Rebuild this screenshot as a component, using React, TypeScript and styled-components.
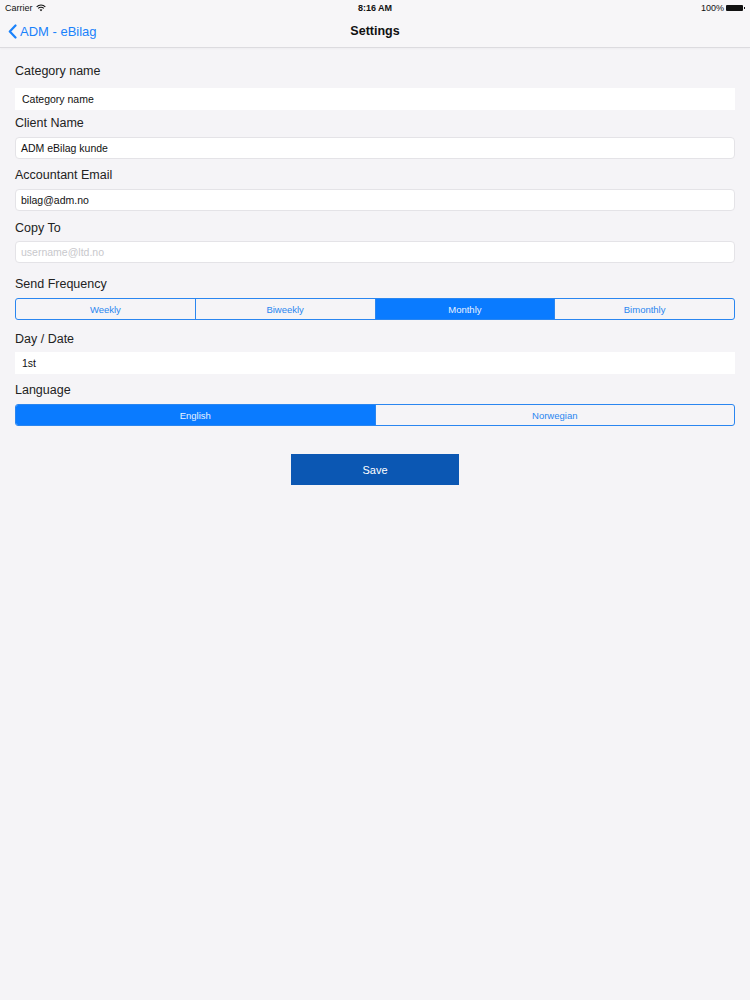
import React, { useState } from "react";
import styled, { createGlobalStyle } from "styled-components";

const GlobalStyle = createGlobalStyle`
  html, body {
    margin: 0;
    padding: 0;
    background: #f5f4f7;
    font-family: "Liberation Sans", Arial, sans-serif;
  }
  * { box-sizing: border-box; }
`;

const Page = styled.div`
  width: 750px;
  min-height: 1000px;
  background: #f5f4f7;
`;

const StatusBar = styled.div`
  height: 15px;
  display: grid;
  grid-template-columns: 1fr auto 1fr;
  align-items: center;
  padding: 0 5px;
  font-size: 9px;
  color: #111;
  background: #f7f6f8;
`;

const StatusLeft = styled.div`
  display: flex;
  align-items: center;
  gap: 3px;
`;

const StatusTime = styled.div`
  font-weight: bold;
  font-size: 9px;
`;

const StatusRight = styled.div`
  display: flex;
  align-items: center;
  justify-content: flex-end;
  gap: 2px;
`;

const Battery = styled.div`
  width: 17px;
  height: 6px;
  background: #111;
  border-radius: 1px;
  position: relative;
  margin-right: 2px;
  &::after {
    content: "";
    position: absolute;
    right: -2px;
    top: 2px;
    width: 1px;
    height: 2px;
    background: #111;
  }
`;

const NavBar = styled.div`
  height: 33px;
  display: grid;
  grid-template-columns: 1fr auto 1fr;
  align-items: center;
  padding: 0 8px;
  background: #f7f6f8;
  border-bottom: 1px solid #dcdbdf;
  box-shadow: 0 1px 2px rgba(0, 0, 0, 0.03);
`;

const BackLink = styled.div`
  display: flex;
  align-items: center;
  gap: 3px;
  color: #1a82fb;
  font-size: 13px;
`;

const Title = styled.div`
  font-weight: bold;
  font-size: 12.5px;
  color: #111;
`;

const Form = styled.div`
  padding: 14px 15px 0 15px;
  display: flex;
  flex-direction: column;
`;

const Group = styled.div<{ $gap: number }>`
  margin-bottom: ${(p) => p.$gap}px;
  display: flex;
  flex-direction: column;
`;

const Label = styled.div<{ $gap: number }>`
  font-size: 12.5px;
  color: #222;
  height: 18px;
  line-height: 18px;
  margin-bottom: ${(p) => p.$gap}px;
`;

const Field = styled.div<{ $bordered?: boolean }>`
  height: 22px;
  display: flex;
  align-items: center;
  background: #fff;
  border-radius: ${(p) => (p.$bordered ? "4px" : "0")};
  border: ${(p) => (p.$bordered ? "1px solid #e4e3e7" : "none")};
  padding: 0 ${(p) => (p.$bordered ? "5px" : "7px")};
  font-size: 10.5px;
  color: #111;
`;

const Placeholder = styled.span`
  color: #c8c8cc;
`;

const Segmented = styled.div`
  height: 22px;
  display: flex;
  border: 1px solid #2a86f0;
  border-radius: 3px;
  overflow: hidden;
`;

const Segment = styled.div<{ $active: boolean }>`
  flex: 1;
  display: flex;
  align-items: center;
  justify-content: center;
  font-size: 9.5px;
  cursor: pointer;
  color: ${(p) => (p.$active ? "#e8f2ff" : "#2a86f0")};
  background: ${(p) => (p.$active ? "#0a7bff" : "transparent")};
  & + & {
    border-left: 1px solid #2a86f0;
  }
`;

const SaveRow = styled.div`
  display: flex;
  justify-content: center;
  padding-top: 28px;
`;

const SaveButton = styled.button`
  width: 168px;
  height: 31px;
  border: none;
  background: #0b57b3;
  color: #fff;
  font-family: inherit;
  font-size: 11px;
`;

const Wifi = () => (
  <svg width="10" height="8" viewBox="0 0 12 9">
    <path d="M6 8.5 L4.3 6.7 A2.5 2.5 0 0 1 7.7 6.7 Z" fill="#111" />
    <path d="M2.6 5 A4.8 4.8 0 0 1 9.4 5" stroke="#111" strokeWidth="1.3" fill="none" />
    <path d="M0.8 3.1 A7.3 7.3 0 0 1 11.2 3.1" stroke="#111" strokeWidth="1.3" fill="none" />
  </svg>
);

const Chevron = () => (
  <svg width="9" height="15" viewBox="0 0 9 15">
    <path d="M7.5 1.5 L1.8 7.5 L7.5 13.5" stroke="#1a82fb" strokeWidth="2.2" fill="none" strokeLinecap="round" strokeLinejoin="round" />
  </svg>
);

const frequencies = ["Weekly", "Biweekly", "Monthly", "Bimonthly"];
const languages = ["English", "Norwegian"];

export default function App() {
  const [freq, setFreq] = useState("Monthly");
  const [lang, setLang] = useState("English");

  return (
    <Page>
      <GlobalStyle />
      <StatusBar>
        <StatusLeft>
          Carrier <Wifi />
        </StatusLeft>
        <StatusTime>8:16 AM</StatusTime>
        <StatusRight>
          100% <Battery />
        </StatusRight>
      </StatusBar>
      <NavBar>
        <BackLink>
          <Chevron />
          ADM - eBilag
        </BackLink>
        <Title>Settings</Title>
        <div />
      </NavBar>
      <Form>
        <Group $gap={4}>
          <Label $gap={8}>Category name</Label>
          <Field>Category name</Field>
        </Group>
        <Group $gap={7}>
          <Label $gap={5}>Client Name</Label>
          <Field $bordered>ADM eBilag kunde</Field>
        </Group>
        <Group $gap={8}>
          <Label $gap={5}>Accountant Email</Label>
          <Field $bordered>bilag@adm.no</Field>
        </Group>
        <Group $gap={12}>
          <Label $gap={4}>Copy To</Label>
          <Field $bordered>
            <Placeholder>username@ltd.no</Placeholder>
          </Field>
        </Group>
        <Group $gap={10}>
          <Label $gap={5}>Send Frequency</Label>
          <Segmented>
            {frequencies.map((f) => (
              <Segment key={f} $active={f === freq} onClick={() => setFreq(f)}>
                {f}
              </Segment>
            ))}
          </Segmented>
        </Group>
        <Group $gap={7}>
          <Label $gap={4}>Day / Date</Label>
          <Field>1st</Field>
        </Group>
        <Group $gap={0}>
          <Label $gap={5}>Language</Label>
          <Segmented>
            {languages.map((l) => (
              <Segment key={l} $active={l === lang} onClick={() => setLang(l)}>
                {l}
              </Segment>
            ))}
          </Segmented>
        </Group>
        <SaveRow>
          <SaveButton>Save</SaveButton>
        </SaveRow>
      </Form>
    </Page>
  );
}
